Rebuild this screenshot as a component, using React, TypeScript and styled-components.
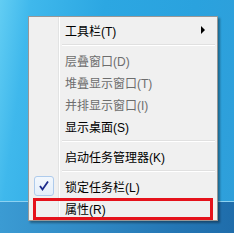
import styled, { createGlobalStyle } from 'styled-components';

const GlobalStyle = createGlobalStyle`
    html, body {
        margin: 0;
        padding: 0;
    }
    body {
        font-family: "Liberation Sans", "Noto Sans CJK SC", sans-serif;
    }
`

const Desktop = styled.div`
    position: relative;
    width: 234px;
    height: 233px;
    overflow: hidden;
    display: flex;
    flex-direction: column;
`

const Wallpaper = styled.div`
    flex: 1;
    background: linear-gradient(98deg, #62cdf3 0%, #3fb8ec 12%, #2ca7e2 40%, #2aa2de 75%, #2f9fda 100%);
`

const Taskbar = styled.div`
    height: 31px;
    border-top: 1px solid #8cd2f2;
    background: linear-gradient(90deg, #3b9bd3 0%, #2f88c3 40%, #2476b4 75%, #1f6dab 100%);
`

const Menu = styled.div`
    position: absolute;
    left: 28px;
    top: 16px;
    width: 190px;
    box-sizing: border-box;
    padding: 2px 2px 1px;
    border: 1px solid #979797;
    background-color: #f0f0f0;
    background-image: linear-gradient(to right,
        transparent 29px, #e2e3e3 29px, #e2e3e3 30px,
        #ffffff 30px, #ffffff 31px, transparent 31px);
    box-shadow: 2px 2px 2px rgba(0, 0, 0, 0.35);
    display: flex;
    flex-direction: column;
    font-size: 12px;
`

const Row = styled.div<{ $disabled?: boolean; $marked?: boolean }>`
    position: relative;
    height: 22px;
    display: flex;
    align-items: center;
    padding-left: 2px;
    color: ${p => (p.$disabled ? '#6d6d6d' : '#000000')};

    &::after {
        content: '';
        display: ${p => (p.$marked ? 'block' : 'none')};
        position: absolute;
        left: 2px;
        right: 2px;
        top: 1px;
        bottom: -1px;
        border: 3px solid #e5121b;
    }
`

const CheckSlot = styled.div`
    width: 22px;
    height: 22px;
    flex: none;
    display: flex;
    align-items: center;
    justify-content: center;
`

const CheckBox = styled.div`
    width: 20px;
    height: 20px;
    box-sizing: border-box;
    border: 1px solid #aecbec;
    border-radius: 3px;
    background: linear-gradient(#f2f7fd, #e3eefa);
    display: flex;
    align-items: center;
    justify-content: center;
`

const Label = styled.span`
    margin-left: 10px;
    flex: 1;
    white-space: nowrap;
`

const Arrow = styled.span`
    width: 0;
    height: 0;
    margin-right: 10px;
    border-top: 4px solid transparent;
    border-bottom: 4px solid transparent;
    border-left: 4px solid #000;
`

const Separator = styled.div`
    height: 8px;
    display: flex;
    align-items: center;
    margin-left: 31px;

    &::before {
        content: '';
        flex: 1;
        height: 1px;
        border-bottom: 1px solid #ffffff;
        background: #e0e0e0;
    }
`

type Item = {
    label: string;
    disabled?: boolean;
    checked?: boolean;
    submenu?: boolean;
    marked?: boolean;
} | 'sep'

const items: Item[] = [
    { label: '工具栏(T)', submenu: true },
    'sep',
    { label: '层叠窗口(D)', disabled: true },
    { label: '堆叠显示窗口(T)', disabled: true },
    { label: '并排显示窗口(I)', disabled: true },
    { label: '显示桌面(S)' },
    'sep',
    { label: '启动任务管理器(K)' },
    'sep',
    { label: '锁定任务栏(L)', checked: true },
    { label: '属性(R)', marked: true },
]

const Check = () => (
    <svg width="12" height="12" viewBox="0 0 12 12">
        <path d="M2 6 L4.5 9.5 L10 1.5" fill="none" stroke="#1c2b8c" strokeWidth="1.8" />
    </svg>
)

const App = () => {
    return (
        <>
            <GlobalStyle />
            <Desktop>
                <Wallpaper />
                <Taskbar />
                <Menu>
                    {items.map((item, i) =>
                        item === 'sep' ? (
                            <Separator key={i} />
                        ) : (
                            <Row key={i} $disabled={item.disabled} $marked={item.marked}>
                                <CheckSlot>
                                    {item.checked && (
                                        <CheckBox>
                                            <Check />
                                        </CheckBox>
                                    )}
                                </CheckSlot>
                                <Label>{item.label}</Label>
                                {item.submenu && <Arrow />}
                            </Row>
                        )
                    )}
                </Menu>
            </Desktop>
        </>
    )
}

export default App
